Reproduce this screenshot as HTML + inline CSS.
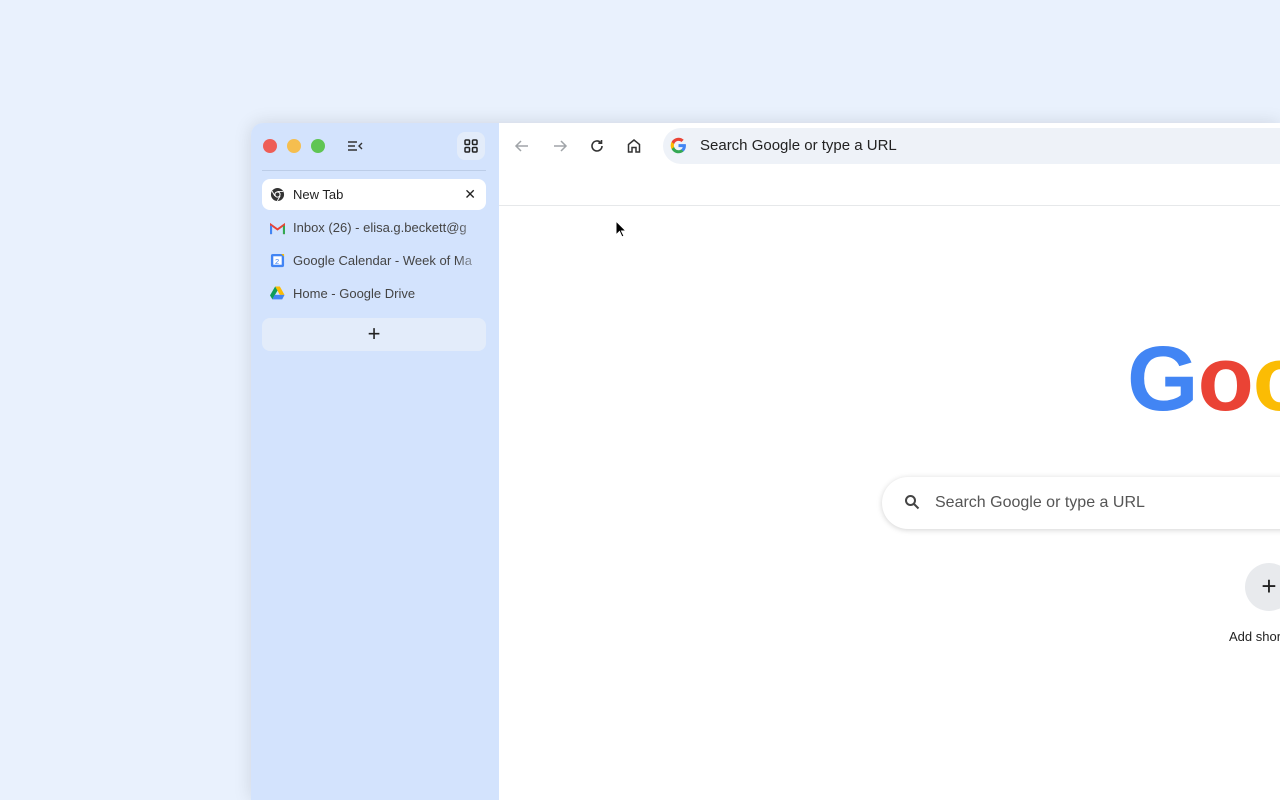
<!DOCTYPE html>
<html><head><style>
*{margin:0;padding:0;box-sizing:border-box}
html,body{width:1280px;height:800px;overflow:hidden}
body{background:#e9f1fd;font-family:"Liberation Sans",sans-serif;position:relative}
.win{position:absolute;left:251px;top:123px;width:1029px;height:677px;border-radius:12px 0 0 0;overflow:hidden;box-shadow:0 0 18px rgba(0,0,0,.12)}
.side{position:absolute;left:0;top:0;width:248px;height:100%;background:#d3e3fd}
.main{position:absolute;left:248px;top:0;right:0;height:100%;background:#fff;overflow:hidden}
.dot{position:absolute;top:16px;width:14px;height:14px;border-radius:50%}
.tab{position:absolute;left:11px;width:224px;height:31px;border-radius:8px;font-size:13px;color:#1f1f1f;line-height:31px;padding-left:31px;white-space:nowrap;overflow:hidden}
.tab svg{position:absolute;left:8px;top:8px}
.fade{position:absolute;right:0;top:0;width:30px;height:31px;background:linear-gradient(90deg,rgba(211,227,253,0),#d3e3fd)}
.t{position:absolute;white-space:nowrap}
</style></head><body>
<div class="win">
 <div class="side">
  <div class="dot" style="left:12px;background:#ee5e57"></div>
  <div class="dot" style="left:36px;background:#f5be4f"></div>
  <div class="dot" style="left:60px;background:#5fc553"></div>
  <svg style="position:absolute;left:96px;top:16px" width="16" height="14" viewBox="0 0 16 14" fill="none" stroke="#333" stroke-width="1.4"><path d="M1 3h9M1 7h7M1 11h9M15 4l-3 3 3 3"/></svg>
  <div style="position:absolute;left:206px;top:9px;width:28px;height:28px;border-radius:8px;background:#e3ecfa"></div>
  <svg style="position:absolute;left:213px;top:16px" width="14" height="14" viewBox="0 0 14 14" fill="none" stroke="#222" stroke-width="1.5"><rect x="1" y="1" width="4.5" height="4.5" rx="1"/><rect x="8.5" y="1" width="4.5" height="4.5" rx="1"/><rect x="1" y="8.5" width="4.5" height="4.5" rx="1"/><rect x="8.5" y="8.5" width="4.5" height="4.5" rx="1"/></svg>
  <div style="position:absolute;left:11px;top:47px;width:224px;height:1px;background:#bccde8"></div>
  <div class="tab" style="top:56px;background:#fff">New Tab
   <svg width="15" height="15" viewBox="0 0 16 16"><circle cx="8" cy="8" r="7" fill="#333"/><circle cx="8" cy="8" r="3.3" fill="#fff"/><circle cx="8" cy="8" r="2.2" fill="#333"/><path d="M8 4.7h6M5.2 9.6L2.2 4.4M10.8 9.6l-3 5.2" stroke="#fff" stroke-width="1"/></svg>
   <span style="position:absolute;right:10px;top:0;font-size:14px;color:#222">✕</span></div>
  <div class="tab" style="top:89px;color:#444">Inbox (26) - elisa.g.beckett@g
   <svg width="15" height="13" viewBox="0 0 16 12" style="top:10px"><path d="M1 12V2l7 5 7-5v10" fill="none" stroke="#ea4335" stroke-width="2"/><path d="M1 12V3" stroke="#4285f4" stroke-width="2.5"/><path d="M15 12V3" stroke="#34a853" stroke-width="2.5"/></svg><div class="fade"></div></div>
  <div class="tab" style="top:122px;color:#444">Google Calendar - Week of Ma
   <svg width="15" height="15" viewBox="0 0 16 16"><rect x="1" y="1" width="14" height="14" rx="2" fill="#4285f4"/><rect x="3.5" y="3.5" width="9" height="9" fill="#fff"/><path d="M12 1h3v3" fill="#fbbc04"/><text x="5.3" y="11.5" font-size="8" fill="#4285f4" font-family="Liberation Sans">2</text></svg><div class="fade"></div></div>
  <div class="tab" style="top:155px;color:#444">Home - Google Drive
   <svg width="15" height="14" viewBox="0 0 16 14"><path d="M5.5 0h5l5 9h-5z" fill="#fbbc04"/><path d="M5.5 0L0 9.5l2.5 4.3L8 4.4z" fill="#0f9d58"/><path d="M2.5 13.8h10.5l2.5-4.8H5z" fill="#4285f4"/></svg></div>
  <div style="position:absolute;left:11px;top:195px;width:224px;height:33px;border-radius:8px;background:#e3ecfa;text-align:center;font-size:22px;line-height:31px;color:#222">+</div>
 </div>
 <div class="main">
  <svg style="position:absolute;left:15px;top:15px" width="16" height="16" viewBox="0 0 16 16" fill="none" stroke="#a0a4a8" stroke-width="1.5"><path d="M14 8H2M7 3L2 8l5 5"/></svg>
  <svg style="position:absolute;left:53px;top:15px" width="16" height="16" viewBox="0 0 16 16" fill="none" stroke="#a0a4a8" stroke-width="1.5"><path d="M2 8h12M9 3l5 5-5 5"/></svg>
  <svg style="position:absolute;left:90px;top:15px" width="16" height="16" viewBox="0 0 16 16" fill="none" stroke="#333" stroke-width="1.6"><path d="M13 8a5 5 0 1 1-1.5-3.6"/><path d="M12.5 2v3.2H9.3"/></svg>
  <svg style="position:absolute;left:127px;top:15px" width="16" height="16" viewBox="0 0 16 16" fill="none" stroke="#333" stroke-width="1.5"><path d="M2.5 14V6.5L8 2l5.5 4.5V14H10V9.5H6V14z"/></svg>
  <div style="position:absolute;left:164px;top:5px;width:700px;height:36px;border-radius:18px;background:#eef2f8"></div>
  <svg style="position:absolute;left:171px;top:14px" width="17" height="17" viewBox="0 0 48 48"><path fill="#4285f4" d="M45 24.5c0-1.6-.1-3.1-.4-4.5H24v8.5h11.8c-.5 2.8-2.1 5.1-4.4 6.6v5.5h7.1c4.2-3.8 6.5-9.5 6.5-16.1z"/><path fill="#34a853" d="M24 46c5.9 0 10.9-2 14.5-5.3l-7.1-5.5c-2 1.3-4.5 2.1-7.4 2.1-5.7 0-10.6-3.900-12.3-9.1H4.4v5.7C8 41 15.4 46 24 46z"/><path fill="#fbbc04" d="M11.7 28.2c-.4-1.3-.7-2.7-.7-4.2s.3-2.9.7-4.2v-5.7H4.4C2.9 17 2 20.4 2 24s.9 7 2.4 9.9z"/><path fill="#ea4335" d="M24 10.8c3.2 0 6.1 1.1 8.4 3.3l6.3-6.3C34.9 4.2 29.9 2 24 2 15.4 2 8 7 4.4 14.1l7.3 5.7c1.7-5.2 6.6-9 12.3-9z"/></svg>
  <div class="t" style="left:201px;top:14px;font-size:15px;color:#222">Search Google or type a URL</div>
  <div style="position:absolute;left:0;right:0;top:82px;height:1px;background:#e6e8ea"></div>
  <div class="t" style="left:628px;top:206px;font-size:92px;font-weight:bold;letter-spacing:-1px;line-height:100px"><span style="color:#4285f4">G</span><span style="color:#ea4335">o</span><span style="color:#fbbc04">o</span></div>
  <div style="position:absolute;left:383px;top:354px;width:600px;height:52px;border-radius:26px;background:#fff;box-shadow:0 1px 6px rgba(0,0,0,.18)"></div>
  <svg style="position:absolute;left:405px;top:371px" width="16" height="16" viewBox="0 0 16 16" fill="none" stroke="#444" stroke-width="2"><circle cx="6.5" cy="6.5" r="4.5"/><path d="M10 10l4.5 4.5"/></svg>
  <div class="t" style="left:436px;top:371px;font-size:16px;color:#555">Search Google or type a URL</div>
  <div style="position:absolute;left:746px;top:440px;width:48px;height:48px;border-radius:50%;background:#e8eaed;font-size:26px;line-height:46px;text-align:center;color:#222">+</div>
  <div class="t" style="left:730px;top:506px;font-size:13px;color:#222">Add shortcut</div>
 </div>
</div>
<svg style="position:absolute;left:615px;top:220px" width="12" height="18" viewBox="0 0 12 18"><path d="M1 1v14l3.5-3.5 2.5 5.5 2-1-2.5-5H11z" fill="#000" stroke="#fff" stroke-width="1"/></svg>
</body></html>
